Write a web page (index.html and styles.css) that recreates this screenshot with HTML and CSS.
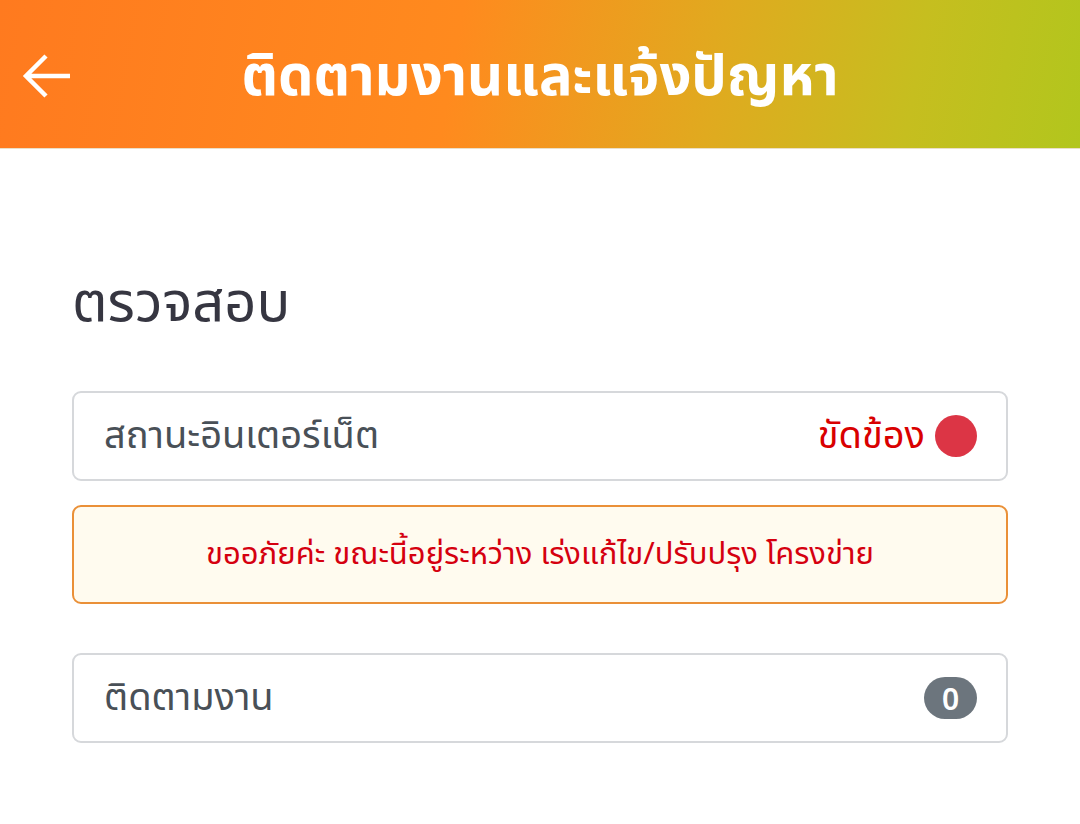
FILE: index.html
```html
<!DOCTYPE html>
<html lang="th">

<head>
    <meta charset="UTF-8">
    <meta name="viewport" content="width=device-width, initial-scale=1.0">
    <title>ติดตามงานและแจ้งปัญหา</title>
    <link rel="stylesheet" href="styles.css">
</head>

<body>
    <div class="topbar">
        <a href="#" class="back">
            <svg width="50" height="50" viewBox="0 0 50 50">
                <path d="M48 25 H5 M24 5 L4 25 L24 45" fill="none" stroke="#fff" stroke-width="4.5"/>
            </svg>
        </a>
        <h1>ติดตามงานและแจ้งปัญหา</h1>
    </div>

    <div class="content">
        <h2>ตรวจสอบ</h2>

        <div class="row">
            <span class="label">สถานะอินเตอร์เน็ต</span>
            <span class="status">ขัดข้อง <i class="dot"></i></span>
        </div>

        <div class="alert">ขออภัยค่ะ ขณะนี้อยู่ระหว่าง เร่งแก้ไข/ปรับปรุง โครงข่าย</div>

        <div class="row">
            <span class="label">ติดตามงาน</span>
            <span class="badge">0</span>
        </div>
    </div>
</body>

</html>
```

FILE: styles.css
```css
* {
    margin: 0;
    padding: 0;
    box-sizing: border-box;
}

body {
    background: #fff;
    font-family: "Noto Sans", "Noto Sans Thai", sans-serif;
    color: #343a40;
}

.topbar {
    height: 149px;
    background: linear-gradient(100deg, #ff7a1f 0%, #ff8a1e 42%, #e0aa1f 66%, #c6be1f 84%, #b2c61d 100%);
    border-bottom: 1px solid #eadfc8;
    display: flex;
    align-items: center;
    justify-content: center;
    position: relative;
}

.back {
    position: absolute;
    left: 22px;
    top: 51px;
    width: 50px;
    height: 50px;
}

.topbar h1 {
    color: #fff;
    font-size: 56px;
    font-weight: 700;
    margin-top: 6px;
}

.content {
    padding: 118px 72px 0 72px;
}

.content h2 {
    font-size: 56px;
    line-height: 64px;
    font-weight: 400;
    color: #363641;
    margin-bottom: 60px;
}

.row {
    height: 90px;
    border: 2px solid #d6d8db;
    border-radius: 9px;
    display: flex;
    align-items: center;
    justify-content: space-between;
    padding: 0 29px 0 30px;
}

.label {
    font-size: 38px;
    color: #495057;
}

.status {
    font-size: 38px;
    color: #d90000;
    display: flex;
    align-items: center;
    gap: 10px;
}

.dot {
    width: 42px;
    height: 42px;
    border-radius: 50%;
    background: #dc3545;
}

.alert {
    margin: 24px 0 49px 0;
    height: 99px;
    background: #fffbef;
    border: 2px solid #ea9038;
    border-radius: 9px;
    color: #d5000f;
    font-size: 31px;
    display: flex;
    align-items: center;
    justify-content: center;
}

.badge {
    background: #6c757d;
    color: #fff;
    font-size: 30px;
    font-weight: 600;
    border-radius: 21px;
    width: 53px;
    height: 42px;
    display: flex;
    align-items: center;
    justify-content: center;
}
```
